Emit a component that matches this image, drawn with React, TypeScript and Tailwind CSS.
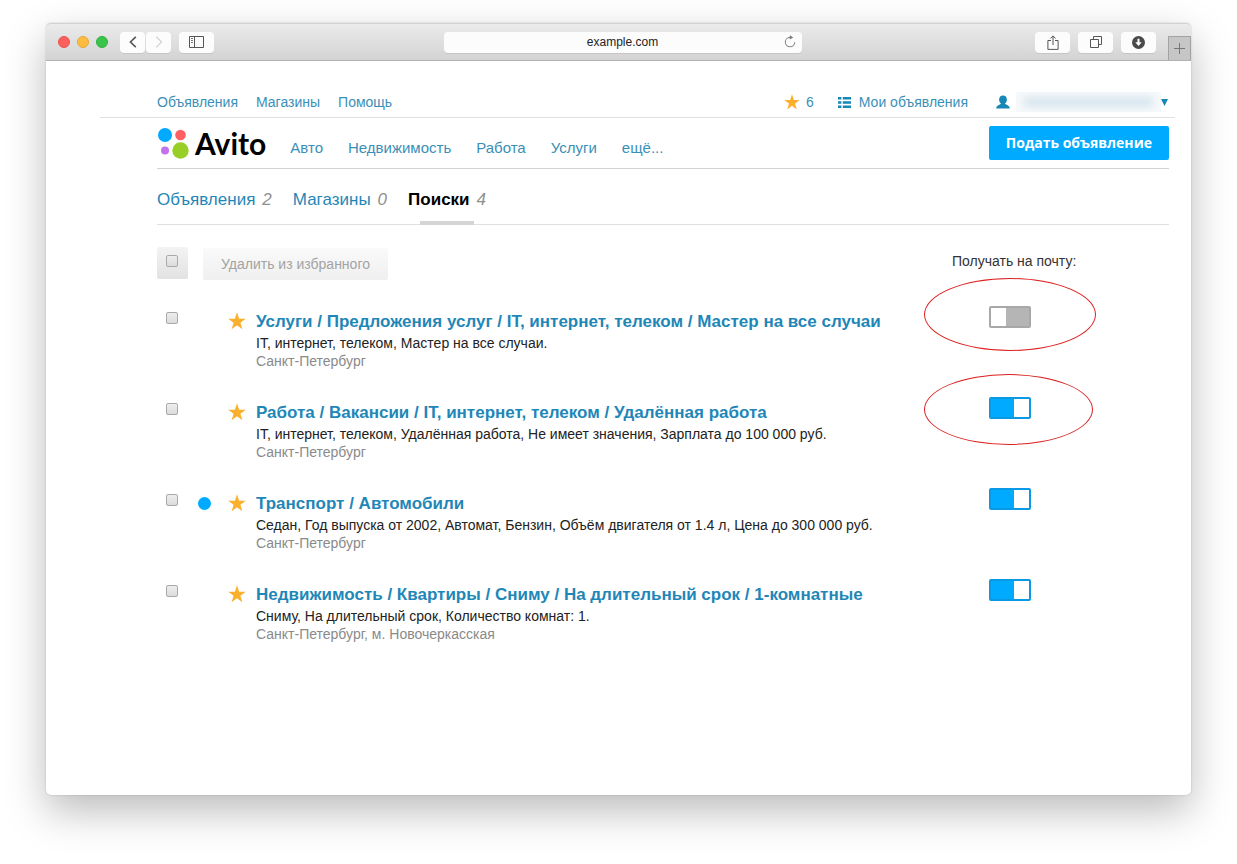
import React, { useState } from 'react';
import clsx from 'clsx';

interface SavedSearch {
  id: number;
  title: string;
  params: string;
  city: string;
  isNew?: boolean;
  notify: boolean;
  mark?: string;
}

const topLinks = ['Объявления', 'Магазины', 'Помощь'];

const categories = ['Авто', 'Недвижимость', 'Работа', 'Услуги', 'ещё...'];

const tabs = [
  { name: 'Объявления', count: 2, active: false },
  { name: 'Магазины', count: 0, active: false },
  { name: 'Поиски', count: 4, active: true },
];

const initialSearches: SavedSearch[] = [
  {
    id: 1,
    title: 'Услуги / Предложения услуг / IT, интернет, телеком / Мастер на все случаи',
    params: 'IT, интернет, телеком, Мастер на все случаи.',
    city: 'Санкт-Петербург',
    notify: false,
    mark: '-left-[65px] -top-[28px] h-[73px] w-[172px]',
  },
  {
    id: 2,
    title: 'Работа / Вакансии / IT, интернет, телеком / Удалённая работа',
    params: 'IT, интернет, телеком, Удалённая работа, Не имеет значения, Зарплата до 100 000 руб.',
    city: 'Санкт-Петербург',
    notify: true,
    mark: '-left-[65px] -top-[23px] h-[71px] w-[169px]',
  },
  {
    id: 3,
    title: 'Транспорт / Автомобили',
    params: 'Седан, Год выпуска от 2002, Автомат, Бензин, Объём двигателя от 1.4 л, Цена до 300 000 руб.',
    city: 'Санкт-Петербург',
    isNew: true,
    notify: true,
  },
  {
    id: 4,
    title: 'Недвижимость / Квартиры / Сниму / На длительный срок / 1-комнатные',
    params: 'Сниму, На длительный срок, Количество комнат: 1.',
    city: 'Санкт-Петербург, м. Новочеркасская',
    notify: true,
  },
];

const Star = ({ className }: { className?: string }) => (
  <svg viewBox="0 0 18 18" className={className} fill="#fbb02d">
    <path d="M9 0.3 11.1 6.7H17.8L12.4 10.7 14.4 17.3 9 13.3 3.6 17.3 5.6 10.7 0.2 6.7H6.9Z" />
  </svg>
);

const checkboxClass =
  'block size-3 shrink-0 appearance-none rounded-[2px] border border-[#a9a9a9] bg-linear-to-b from-[#ededed] to-[#dcdcdc] checked:from-[#00aaff] checked:to-[#00aaff]';

const ToolbarButton = ({ label, className, children }: { label: string; className?: string; children: React.ReactNode }) => (
  <button
    type="button"
    aria-label={label}
    className={clsx('flex h-[21px] items-center justify-center rounded-[4px] bg-[#fcfcfc] shadow-[0_1px_0_rgba(0,0,0,0.08)]', className)}
  >
    {children}
  </button>
);

const BrowserBar = () => (
  <div className="grid h-[38px] grid-cols-[1fr_358px_1fr] items-center rounded-t-[5px] border-y border-t-[#d2d2d2] border-b-[#b1b1b1] bg-linear-to-b from-[#ebebeb] to-[#d3d3d3] pl-2">
    <div className="flex items-center pl-1">
      <div className="flex gap-[7px]">
        <span className="size-3 rounded-full border border-[#e8534e] bg-[#fc605c]" />
        <span className="size-3 rounded-full border border-[#e6a935] bg-[#fdbc40]" />
        <span className="size-3 rounded-full border border-[#2fb33d] bg-[#3ac44b]" />
      </div>
      <div className="ml-3 flex gap-px">
        <ToolbarButton label="Назад" className="w-[25px]">
          <svg viewBox="0 0 8 12" className="h-3 w-2" fill="none" stroke="#555" strokeWidth="1.6">
            <path d="M6.8 0.8 1.4 6 6.8 11.2" />
          </svg>
        </ToolbarButton>
        <ToolbarButton label="Вперёд" className="w-[25px]">
          <svg viewBox="0 0 8 12" className="h-3 w-2" fill="none" stroke="#d4d4d4" strokeWidth="1.3">
            <path d="M1.2 0.8 6.6 6 1.2 11.2" />
          </svg>
        </ToolbarButton>
      </div>
      <ToolbarButton label="Боковая панель" className="ml-2 w-[35px]">
        <svg viewBox="0 0 15 12" className="h-3 w-[15px]" fill="none" stroke="#555">
          <path d="M0.5 0.5H14.5V11.5H0.5ZM5.5 0.5V11.5" />
          <path d="M2 2.5H4M2 4.5H4M2 6.5H4" strokeWidth="0.8" />
        </svg>
      </ToolbarButton>
    </div>

    <div className="relative">
      <input
        aria-label="Адрес"
        defaultValue="example.com"
        className="block h-[21px] w-full rounded-[4px] bg-[#fcfcfc] text-center text-xs text-[#222] shadow-[0_1px_0_rgba(0,0,0,0.08)]"
      />
      <button type="button" aria-label="Обновить" className="absolute right-1.5 top-[3px]">
        <svg viewBox="0 0 12 13" className="h-[13px] w-3" fill="none" stroke="#888" strokeWidth="1.1">
          <path d="M6 2.4A4.7 4.7 0 1 0 10.7 7.2" />
          <path d="M5.8 0.2 9.2 2.4 5.8 4.6Z" fill="#777" stroke="none" />
        </svg>
      </button>
    </div>

    <div className="flex h-full items-center justify-end">
      <div className="mr-3 flex gap-2">
        <ToolbarButton label="Поделиться" className="w-[35px]">
          <svg viewBox="0 0 12 15" className="h-[15px] w-3" fill="none" stroke="#555">
            <path d="M4 5.5H0.9V14.4H11.1V5.5H8" />
            <path d="M6 10V1M3.4 3.5 6 0.9 8.6 3.5" />
          </svg>
        </ToolbarButton>
        <ToolbarButton label="Вкладки" className="w-[35px]">
          <svg viewBox="0 0 12 12" className="size-3" fill="none" stroke="#555">
            <path d="M0.5 3.5H8.5V11.5H0.5Z" />
            <path d="M3.5 3.3V0.5H11.5V8.5H8.7" />
          </svg>
        </ToolbarButton>
        <ToolbarButton label="Загрузки" className="w-[35px]">
          <svg viewBox="0 0 13 13" className="size-[13px]">
            <circle cx="6.5" cy="6.5" r="6.5" fill="#4a4a4a" />
            <path d="M5.5 2.8H7.5V6.3H9.7L6.5 10 3.3 6.3H5.5Z" fill="#fff" />
          </svg>
        </ToolbarButton>
      </div>
      <button
        type="button"
        aria-label="Новая вкладка"
        className="flex h-6 w-[23px] items-center justify-center self-end border border-b-0 border-[#a3a3a3] bg-[#c6c6c6]"
      >
        <svg viewBox="0 0 11 11" className="size-[11px]" stroke="#777">
          <path d="M5.5 0V11M0 5.5H11" />
        </svg>
      </button>
    </div>
  </div>
);

const TopBar = () => (
  <div className="ml-[54px] mr-4 flex h-[57px] items-center border-b border-[#e0e0e0] pl-[57px] pr-[7px] pt-[26px] text-sm text-[#3a8fb7]">
    <nav className="flex gap-[18px]">
      {topLinks.map(link => (
        <a key={link} href="#">{link}</a>
      ))}
    </nav>
    <div className="ml-auto flex items-center">
      <a href="#" className="flex items-center gap-1.5">
        <Star className="size-4" />
        6
      </a>
      <a href="#" className="ml-6 flex items-center gap-2">
        <svg viewBox="0 0 13 11" className="h-[11px] w-[13px]" fill="#1787b5">
          <path d="M0 0H3.4V2.4H0ZM4.8 0H13V2.4H4.8ZM0 4.3H3.4V6.7H0ZM4.8 4.3H13V6.7H4.8ZM0 8.6H3.4V11H0ZM4.8 8.6H13V11H4.8Z" />
        </svg>
        Мои объявления
      </a>
      <button type="button" aria-label="Профиль" className="ml-7 flex items-center">
        <svg viewBox="0 0 14 14" className="size-3.5" fill="#1787b5">
          <path d="M7 0.4C9.4 0.4 10.9 2 10.9 4.5 10.9 6.4 10 7.8 9 8.6 9.2 9.8 13.6 10 13.8 13.6H0.2C0.4 10 4.8 9.8 5 8.6 4 7.8 3.1 6.4 3.1 4.5 3.1 2 4.6 0.4 7 0.4Z" />
        </svg>
        <span className="ml-1.5 flex h-5 w-[145px] items-center bg-[#f6f9fb]">
          <span className="mx-2 h-2 w-full bg-[#cfe1eb] blur-[4px]" />
        </span>
        <svg viewBox="0 0 7 7" className="size-[7px]" fill="#1787b5">
          <path d="M0 0H7L3.5 7Z" />
        </svg>
      </button>
    </div>
  </div>
);

const Header = () => (
  <header className="flex h-[51px] items-center border-b border-[#d2d2d2]">
    <a href="#" className="flex items-center gap-1.5">
      <svg viewBox="0 0 32 32" className="size-8">
        <circle cx="8" cy="8" r="7" fill="#00aaff" />
        <circle cx="23.5" cy="8" r="5.3" fill="#ff6163" />
        <circle cx="8" cy="23.5" r="4" fill="#c471ee" />
        <circle cx="23.5" cy="23.5" r="8.2" fill="#97cf26" />
      </svg>
      <span className="font-[Lato] text-[30px] font-bold leading-8 text-black">Avito</span>
    </a>
    <nav className="ml-6 flex gap-[25px] pt-2.5 text-[15px] text-[#3a8fb7]">
      {categories.map(category => (
        <a key={category} href="#">{category}</a>
      ))}
    </nav>
    <button
      type="button"
      className="ml-auto h-[34px] rounded-[2px] bg-[#00aaff] px-[17px] font-['Open_Sans'] text-sm font-bold text-white"
    >
      Подать объявление
    </button>
  </header>
);

const Tabs = () => (
  <nav className="flex h-14 gap-[21px] border-b border-[#e0e0e0] pt-[18px] text-[17px] leading-[26px]">
    {tabs.map(tab => (
      <a
        key={tab.name}
        href="#"
        className={clsx('relative', tab.active ? 'font-bold text-black' : 'text-[#1f87b7]')}
      >
        {tab.name}
        <span className="ml-[7px] font-normal italic text-[#8f8f8f]">{tab.count}</span>
        {tab.active && <span className="absolute inset-x-3 -bottom-px h-1 bg-[#d4d4d4]" />}
      </a>
    ))}
  </nav>
);

const SearchRow = ({ search, onToggle }: { search: SavedSearch; onToggle: () => void }) => (
  <li className="flex items-start">
    <div className="flex w-[99px] items-start pl-[9px] pt-[3px]">
      <input type="checkbox" aria-label={search.title} className={checkboxClass} />
      {search.isNew && <span className="ml-5 mt-[3px] size-[13px] rounded-full bg-[#00aaff]" />}
      <Star className="ml-auto mr-2.5 size-[18px]" />
    </div>
    <div className="flex-1 text-sm leading-[18px]">
      <h3 className="text-[17px] font-bold leading-[25px]">
        <a href="#" className="text-[#1f87b7]">{search.title}</a>
      </h3>
      <p className="text-[#222]">{search.params}</p>
      <p className="text-[#8a8a8a]">{search.city}</p>
    </div>
    <div className="-mt-[3px] w-[217px] pl-[37px]">
      <div className="relative w-[42px]">
        <input
          type="checkbox"
          role="switch"
          aria-label={`Получать на почту: ${search.title}`}
          checked={search.notify}
          onChange={onToggle}
          className="block h-[22px] w-[42px] appearance-none rounded-[2px] border-2 border-[#a8a8a8] bg-[#b5b5b5] before:block before:h-[18px] before:w-[15px] before:bg-white checked:border-[#0a99e4] checked:bg-[#00aaff] checked:before:ml-auto"
        />
        {search.mark && (
          <span className={clsx('pointer-events-none absolute rounded-[50%] border border-[#dc2020]', search.mark)} />
        )}
      </div>
    </div>
  </li>
);

const App = () => {
  const [searches, setSearches] = useState(initialSearches);

  const toggleNotify = (id: number) => {
    setSearches(prev => prev.map(s => (s.id === id ? { ...s, notify: !s.notify } : s)));
  };

  return (
    <div className="flex min-h-screen flex-col bg-white px-[46px] pb-[69px] pt-[23px] font-['Liberation_Sans',Arial,sans-serif]">
      <div className="flex-1 rounded-[5px] bg-white shadow-[0_0_2px_rgba(0,0,0,0.2),0_16px_42px_rgba(0,0,0,0.27)]">
        <BrowserBar />
        <TopBar />
        <main className="ml-[111px] mr-[22px]">
          <Header />
          <Tabs />

          <div className="mt-[22px] flex items-start">
            <label className="flex h-8 w-[31px] rounded-[2px] bg-linear-to-b from-[#f3f3f3] to-[#e2e2e2] pl-[9px] pt-2">
              <input type="checkbox" aria-label="Выбрать все" className={checkboxClass} />
            </label>
            <button
              type="button"
              className="ml-[15px] mt-px h-8 rounded-[2px] bg-linear-to-b from-[#fafafa] to-[#efefef] px-[18px] text-sm text-[#a3a3a3]"
            >
              Удалить из избранного
            </button>
            <span className="ml-auto w-[217px] pt-1 text-sm text-[#333]">Получать на почту:</span>
          </div>

          <ul className="mt-[29px] flex flex-col gap-[30px]">
            {searches.map(search => (
              <SearchRow key={search.id} search={search} onToggle={() => toggleNotify(search.id)} />
            ))}
          </ul>
        </main>
      </div>
    </div>
  );
};

export default App;
